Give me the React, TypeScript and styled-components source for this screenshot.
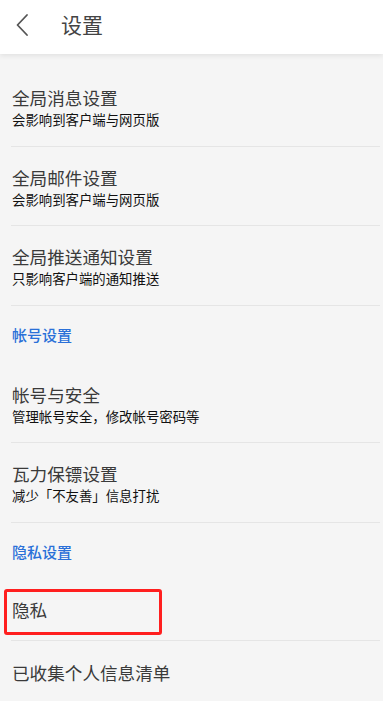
import styled, { createGlobalStyle } from "styled-components";

const GlobalStyle = createGlobalStyle`
  html, body {
    margin: 0;
    padding: 0;
    background: #f5f5f5;
  }
  body {
    font-family: "Noto Sans CJK SC", "Noto Sans", sans-serif;
  }
`;

type Row =
  | { kind: "section"; label: string }
  | { kind: "item"; title: string; sub?: string; marked?: boolean; last?: boolean };

const rows: Row[] = [
  { kind: "item", title: "全局消息设置", sub: "会影响到客户端与网页版" },
  { kind: "item", title: "全局邮件设置", sub: "会影响到客户端与网页版" },
  { kind: "item", title: "全局推送通知设置", sub: "只影响客户端的通知推送" },
  { kind: "section", label: "帐号设置" },
  { kind: "item", title: "帐号与安全", sub: "管理帐号安全，修改帐号密码等" },
  { kind: "item", title: "瓦力保镖设置", sub: "减少「不友善」信息打扰" },
  { kind: "section", label: "隐私设置" },
  { kind: "item", title: "隐私", marked: true },
  { kind: "item", title: "已收集个人信息清单", last: true },
];

export default function App() {
  return (
    <>
      <GlobalStyle />
      <Page>
        <Header>
          <BackButton>
            <svg width="14" height="24" viewBox="0 0 14 24">
              <path
                d="M11 2 L1.5 12 L11 22"
                fill="none"
                stroke="#555"
                strokeWidth="1.8"
                strokeLinecap="round"
                strokeLinejoin="round"
              />
            </svg>
          </BackButton>
          <Title>设置</Title>
        </Header>
        <List>
          {rows.map((row, i) =>
            row.kind === "section" ? (
              <Section key={i}>{row.label}</Section>
            ) : (
              <Item key={i} $single={!row.sub} $last={row.last}>
                <ItemTitle>{row.title}</ItemTitle>
                {row.sub && <ItemSub>{row.sub}</ItemSub>}
                {row.marked && <Mark />}
              </Item>
            )
          )}
        </List>
      </Page>
    </>
  );
}

const Page = styled.div`
  width: 383px;
  min-height: 701px;
  background: #f5f5f5;
  overflow: hidden;
`;

const Header = styled.header`
  height: 54px;
  box-sizing: border-box;
  padding-bottom: 5px;
  background: #ffffff;
  display: flex;
  align-items: center;
  box-shadow: 0 2px 5px rgba(0, 0, 0, 0.08);
  position: relative;
  z-index: 1;
`;

const BackButton = styled.div`
  width: 44px;
  padding-left: 16px;
  display: flex;
  align-items: center;
  box-sizing: border-box;
  margin-right: 17px;
`;

const Title = styled.h1`
  margin: 0;
  font-size: 21px;
  font-weight: 400;
  color: #444;
  line-height: 1;
`;

const List = styled.div`
  padding-top: 13px;
  display: flex;
  flex-direction: column;
`;

const Section = styled.div`
  height: 58px;
  display: flex;
  align-items: center;
  padding-left: 12px;
  font-size: 15px;
  font-weight: 500;
  color: #2a70d8;
`;

const Item = styled.div<{ $single?: boolean; $last?: boolean }>`
  position: relative;
  padding: ${(p) =>
    p.$last ? "20px 12px 18px" : p.$single ? "17px 12px 19px" : "19px 12px 18.5px"};
  display: flex;
  flex-direction: column;

  &::after {
    content: "";
    display: ${(p) => (p.$last ? "none" : "block")};
    position: absolute;
    left: 11px;
    right: 3px;
    bottom: 0;
    height: 1px;
    background: #e5e5e5;
  }
`;

const ItemTitle = styled.div`
  font-size: 17.6px;
  line-height: 24px;
  color: #3a3a3a;
`;

const ItemSub = styled.div`
  font-size: 13.4px;
  line-height: 18px;
  color: #111;
`;

const Mark = styled.div`
  position: absolute;
  left: 4px;
  top: 8px;
  width: 158px;
  height: 46px;
  box-sizing: border-box;
  border: 3px solid #ff1f1f;
  border-radius: 3px;
`;
